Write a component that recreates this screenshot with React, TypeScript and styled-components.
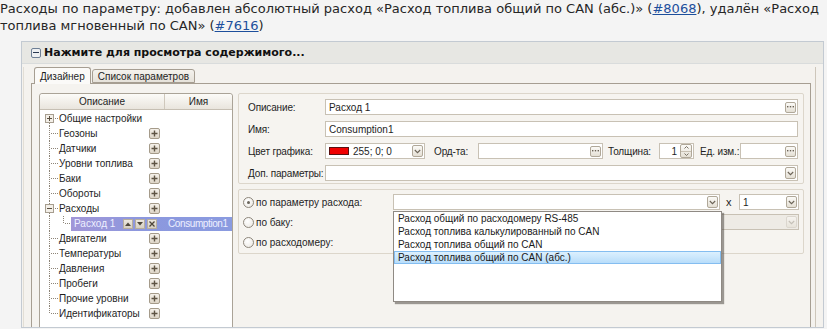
import React from 'react';
import styled, { createGlobalStyle } from 'styled-components';

const UI = `"Liberation Sans", Arial, sans-serif`;

const Global = createGlobalStyle`
  html, body { margin: 0; padding: 0; background: #f4f4f4; }
  * { box-sizing: border-box; }
`;

const Page = styled.div`
  width: 827px;
  height: 329px;
  overflow: hidden;
  background: #f4f4f4;
`;

const Intro = styled.p`
  margin: 0;
  font-family: "DejaVu Sans", sans-serif;
  font-size: 13px;
  line-height: 17px;
  color: #262626;
  white-space: nowrap;
`;

const Link = styled.a`
  color: #1d4f9c;
  text-decoration: underline;
`;

const Spoiler = styled.div`
  margin: 7px 0 0 21px;
  width: 803px;
  height: 287px;
  border: 1px solid #c3cad2;
  overflow: hidden;
  display: flex;
  flex-direction: column;
`;

const SpoilerHead = styled.div`
  height: 22px;
  flex: none;
  background: #e7e7e3;
  border-bottom: 1px solid #d9dcdc;
  display: flex;
  align-items: center;
  gap: 3px;
  padding-left: 9px;
  font-family: "DejaVu Sans", sans-serif;
  font-weight: bold;
  font-size: 11px;
  color: #111;
`;

const SpoilerBody = styled.div`
  flex: 1;
  background: #f4f2ee;
  padding: 3px 7px 0 1px;
  overflow: hidden;
`;

const Window = styled.div`
  height: 300px;
  border-left: 1px solid #e2ded5;
  border-right: 1px solid #cdc6ba;
  padding: 0 4px 0 7px;
  font-family: ${UI};
  font-size: 10px;
  color: #1e1e1e;
`;

const TabStrip = styled.div`
  display: flex;
  align-items: flex-end;
  gap: 1px;
  height: 16px;
  padding-left: 3px;
`;

const Tab = styled.div<{ $active?: boolean }>`
  position: relative;
  z-index: ${(p) => (p.$active ? 2 : 1)};
  height: ${(p) => (p.$active ? 17 : 14)}px;
  margin-bottom: ${(p) => (p.$active ? -1 : 0)}px;
  padding: 0 5px;
  display: flex;
  align-items: center;
  border: 1px solid #a69e92;
  border-bottom: ${(p) => (p.$active ? 'none' : '1px solid #a69e92')};
  border-radius: 3px 3px 0 0;
  background: ${(p) => (p.$active ? '#fbfaf8' : 'linear-gradient(#f4f2ed, #e6e2da)')};
`;

const TabPanel = styled.div`
  height: 280px;
  border: 1px solid #a69e92;
  background: #f5f3ef;
  padding: 9px 6px 0 7px;
  display: flex;
  gap: 5px;
  align-items: flex-start;
`;

/* ---------- tree ---------- */

const Tree = styled.div`
  width: 194px;
  flex: none;
  height: 260px;
  background: #fff;
  border: 1px solid #aaa397;
  border-radius: 3px 3px 0 0;
  overflow: hidden;
`;

const TreeHead = styled.div`
  display: grid;
  grid-template-columns: 124px 1fr;
  height: 16px;
  background: linear-gradient(#fcfbf8, #e9e5dd);
  border-bottom: 1px solid #c6bfb3;
  border-radius: 3px 3px 0 0;
`;

const HeadCell = styled.div<{ $divider?: boolean }>`
  display: flex;
  align-items: center;
  justify-content: center;
  border-left: ${(p) => (p.$divider ? '1px solid #cfc8bc' : 'none')};
`;

const TreeBody = styled.div`
  padding-top: 1px;
`;

const Row = styled.div`
  height: 15px;
  display: flex;
  align-items: center;
`;

const NodeLabel = styled.div`
  width: 90px;
  flex: none;
  white-space: nowrap;
`;

const SmallBtn = styled.span`
  width: 11px;
  height: 11px;
  flex: none;
  display: inline-flex;
  align-items: center;
  justify-content: center;
  border: 1px solid #a59b8a;
  border-radius: 2px;
  background: linear-gradient(#f5f1ea, #ddd5c7);
`;

const Selected = styled.div`
  flex: 1;
  height: 14px;
  display: flex;
  align-items: center;
  padding-left: 3px;
  background: linear-gradient(90deg, #a196d8, #8c98de 45%, #8a9be0);
  color: #eef0ff;
  white-space: nowrap;
  overflow: hidden;
`;

const SelLabel = styled.span`
  width: 49px;
  flex: none;
`;

const SelBtns = styled.span`
  display: flex;
  gap: 2px;
  margin-right: 11px;
`;

const SelBtn = styled.span`
  width: 10px;
  height: 10px;
  display: inline-flex;
  align-items: center;
  justify-content: center;
  background: linear-gradient(#ece7de, #d6cfc2);
  border: 1px solid #b7ad9d;
`;

const SelName = styled.span`
  letter-spacing: -0.4px;
`;

/* ---------- form ---------- */

const FormArea = styled.div`
  flex: 1;
  display: flex;
  flex-direction: column;
  gap: 5px;
`;

const Group = styled.div`
  border: 1px solid #dcd6cb;
  border-radius: 2px;
  background: #f6f4f0;
`;

const PropsGrid = styled(Group)`
  display: grid;
  grid-template-columns: 77px 1fr;
  row-gap: 6px;
  align-items: center;
  padding: 5px 5px 2px 9px;
`;

const SourceGrid = styled(Group)`
  display: grid;
  grid-template-columns: 150px 1fr;
  grid-auto-rows: 20px;
  align-items: center;
  padding: 2px 4px 1px 4px;
`;

const Label = styled.span<{ $w?: number; $ml?: number }>`
  white-space: nowrap;
  flex: none;
  letter-spacing: -0.15px;
  width: ${(p) => (p.$w ? `${p.$w}px` : 'auto')};
  margin-left: ${(p) => p.$ml || 0}px;
`;

const Field = styled.div<{ $w?: number; $disabled?: boolean }>`
  height: 16px;
  display: flex;
  align-items: center;
  padding: 0 1px 0 3px;
  border: 1px solid #c8c1b4;
  background: ${(p) => (p.$disabled ? '#eeebe5' : '#fff')};
  width: ${(p) => (p.$w ? `${p.$w}px` : 'auto')};
  flex: ${(p) => (p.$w ? 'none' : '1')};
  white-space: nowrap;
  position: relative;
`;

const FieldText = styled.span`
  flex: 1;
`;

const BtnBox = styled.span<{ $dim?: boolean }>`
  width: 11px;
  height: 12px;
  flex: none;
  display: inline-flex;
  align-items: center;
  justify-content: center;
  border: 1px solid ${(p) => (p.$dim ? '#cfc9bf' : '#b0a899')};
  border-radius: 2px;
  background: linear-gradient(#fbfaf7, #e4dfd4);
  opacity: ${(p) => (p.$dim ? 0.6 : 1)};
`;

const Swatch = styled.span`
  width: 20px;
  height: 8px;
  background: #f00000;
  border: 1px solid #5a1010;
  margin-right: 4px;
`;

const Inline = styled.div`
  display: flex;
  align-items: center;
`;

const SpinBtns = styled.span`
  width: 12px;
  height: 14px;
  display: flex;
  flex-direction: column;
  border: 1px solid #b0a899;
  border-radius: 2px;
  background: linear-gradient(#fbfaf7, #e4dfd4);
  margin-left: 3px;
`;

const SpinHalf = styled.span<{ $top?: boolean }>`
  flex: 1;
  display: flex;
  align-items: center;
  justify-content: center;
  border-bottom: ${(p) => (p.$top ? '1px solid #c8c0b2' : 'none')};
`;

const Radio = styled.label`
  display: flex;
  align-items: center;
  gap: 2px;
  white-space: nowrap;
`;

const RadioCircle = styled.span<{ $on?: boolean }>`
  width: 11px;
  height: 11px;
  border-radius: 50%;
  border: 1px solid #8e877c;
  background: radial-gradient(circle at 40% 35%, #fff, #e9e6e0);
  display: inline-flex;
  align-items: center;
  justify-content: center;
  &::after {
    content: '';
    width: 3px;
    height: 3px;
    border-radius: 50%;
    background: ${(p) => (p.$on ? '#6a655c' : 'transparent')};
  }
`;

const ComboWrap = styled.div`
  position: relative;
  width: 327px;
  flex: none;
  display: flex;
`;

const Times = styled.span`
  margin-left: 6px;
  margin-right: auto;
  font-size: 11px;
`;

const Popup = styled.div`
  position: absolute;
  z-index: 5;
  left: 0;
  top: calc(100% + 1px);
  width: 329px;
  height: 91px;
  background: #fff;
  border: 1px solid #8f8a84;
  box-shadow: 2px 2px 1px rgba(80, 75, 70, 0.55);
`;

const Option = styled.div<{ $sel?: boolean }>`
  height: 13px;
  line-height: 11px;
  padding-left: 3px;
  white-space: nowrap;
  color: #1a1a1a;
  border: 1px solid ${(p) => (p.$sel ? '#84bdf0' : 'transparent')};
  background: ${(p) => (p.$sel ? 'linear-gradient(#dcf0fe, #b8ddfa)' : 'transparent')};
`;

const Minus = styled.span`
  width: 10px;
  height: 10px;
  border: 1px solid #6e7f95;
  border-radius: 2px;
  background: #eef0f2;
  display: inline-flex;
  align-items: center;
  justify-content: center;
  &::after {
    content: '';
    width: 6px;
    height: 1px;
    background: #2b3a52;
  }
`;

/* ---------- icons ---------- */

const DOT = '#8d8477';

type ConnKind = 'first' | 'mid' | 'last' | 'open' | 'pass';

const Box = ({ minus }: { minus?: boolean }) => (
  <g>
    <rect x="5.5" y="3.5" width="8" height="8" fill="#f3efe8" stroke="#a69d8f" rx="1" />
    <line x1="7" y1="7.5" x2="12" y2="7.5" stroke="#5a5040" />
    {!minus && <line x1="9.5" y1="5" x2="9.5" y2="10" stroke="#5a5040" />}
  </g>
);

const Connector = ({ kind }: { kind: ConnKind }) => (
  <svg width="19" height="15" viewBox="0 0 19 15" shapeRendering="crispEdges" style={{ flex: 'none' }}>
    {(kind === 'mid' || kind === 'pass') && (
      <line x1="9.5" y1="0" x2="9.5" y2="15" stroke={DOT} strokeDasharray="1 1" />
    )}
    {kind === 'last' && <line x1="9.5" y1="0" x2="9.5" y2="8" stroke={DOT} strokeDasharray="1 1" />}
    {kind === 'first' && <line x1="9.5" y1="12" x2="9.5" y2="15" stroke={DOT} strokeDasharray="1 1" />}
    {kind === 'open' && (
      <>
        <line x1="9.5" y1="0" x2="9.5" y2="3" stroke={DOT} strokeDasharray="1 1" />
        <line x1="9.5" y1="12" x2="9.5" y2="15" stroke={DOT} strokeDasharray="1 1" />
      </>
    )}
    {(kind === 'mid' || kind === 'last') && (
      <line x1="11" y1="7.5" x2="18" y2="7.5" stroke={DOT} strokeDasharray="1 1" />
    )}
    {(kind === 'first' || kind === 'open') && (
      <line x1="15" y1="7.5" x2="18" y2="7.5" stroke={DOT} strokeDasharray="1 1" />
    )}
    {(kind === 'first' || kind === 'open') && <Box minus={kind === 'open'} />}
  </svg>
);

const SubConnector = () => (
  <svg width="12" height="15" viewBox="0 0 12 15" shapeRendering="crispEdges" style={{ flex: 'none' }}>
    <line x1="4.5" y1="0" x2="4.5" y2="8" stroke={DOT} strokeDasharray="1 1" />
    <line x1="6" y1="7.5" x2="12" y2="7.5" stroke={DOT} strokeDasharray="1 1" />
  </svg>
);

const PlusIcon = () => (
  <svg width="7" height="7" viewBox="0 0 7 7">
    <path d="M3.5 0.5v6M0.5 3.5h6" stroke="#5e5444" strokeWidth="1.4" />
  </svg>
);

const Chevron = ({ color = '#6b6356' }: { color?: string }) => (
  <svg width="7" height="5" viewBox="0 0 7 5">
    <path d="M0.8 1l2.7 2.7L6.2 1" stroke={color} strokeWidth="1.1" fill="none" />
  </svg>
);

const Dots = () => (
  <svg width="7" height="2" viewBox="0 0 7 2">
    <rect x="0" y="0" width="1.4" height="1.4" fill="#6b6356" />
    <rect x="2.8" y="0" width="1.4" height="1.4" fill="#6b6356" />
    <rect x="5.6" y="0" width="1.4" height="1.4" fill="#6b6356" />
  </svg>
);

const Tri = ({ up }: { up?: boolean }) => (
  <svg width="6" height="4" viewBox="0 0 6 4">
    <path d={up ? 'M0 4L3 0.5 6 4z' : 'M0 0L3 3.5 6 0z'} fill="#4e463a" />
  </svg>
);

const TinyTri = ({ up }: { up?: boolean }) => (
  <svg width="5" height="3" viewBox="0 0 5 3">
    <path d={up ? 'M0.5 2.5L2.5 0.5 4.5 2.5' : 'M0.5 0.5L2.5 2.5 4.5 0.5'} stroke="#6b6356" fill="none" strokeWidth="0.9" />
  </svg>
);

const Cross = () => (
  <svg width="6" height="6" viewBox="0 0 6 6">
    <path d="M0.5 0.5l5 5M5.5 0.5l-5 5" stroke="#4e463a" strokeWidth="1.3" />
  </svg>
);

const EllipsisBtn = () => (
  <BtnBox style={{ height: 11 }}>
    <Dots />
  </BtnBox>
);

const DropBtn = ({ dim }: { dim?: boolean }) => (
  <BtnBox $dim={dim}>
    <Chevron color={dim ? '#a9a398' : '#6b6356'} />
  </BtnBox>
);

type Node = { label: string; kind: ConnKind; plus: boolean };

const before: Node[] = [
  { label: 'Общие настройки', kind: 'first', plus: false },
  { label: 'Геозоны', kind: 'mid', plus: true },
  { label: 'Датчики', kind: 'mid', plus: true },
  { label: 'Уровни топлива', kind: 'mid', plus: true },
  { label: 'Баки', kind: 'mid', plus: true },
  { label: 'Обороты', kind: 'mid', plus: true },
  { label: 'Расходы', kind: 'open', plus: true },
];

const after: Node[] = [
  { label: 'Двигатели', kind: 'mid', plus: true },
  { label: 'Температуры', kind: 'mid', plus: true },
  { label: 'Давления', kind: 'mid', plus: true },
  { label: 'Пробеги', kind: 'mid', plus: true },
  { label: 'Прочие уровни', kind: 'mid', plus: true },
  { label: 'Идентификаторы', kind: 'last', plus: true },
];

const TreeRow = ({ n }: { n: Node }) => (
  <Row>
    <Connector kind={n.kind} />
    <NodeLabel>{n.label}</NodeLabel>
    {n.plus && (
      <SmallBtn>
        <PlusIcon />
      </SmallBtn>
    )}
  </Row>
);

const options = [
  'Расход общий по расходомеру RS-485',
  'Расход топлива калькулированный по CAN',
  'Расход топлива общий по CAN',
  'Расход топлива общий по CAN (абс.)',
];

export default function App() {
  return (
    <Page>
      <Global />
      <Intro>
        Расходы по параметру: добавлен абсолютный расход «Расход топлива общий по CAN (абс.)» (
        <Link href="#">#8068</Link>), удалён «Расход
        <br />
        топлива мгновенный по CAN» (<Link href="#">#7616</Link>)
      </Intro>
      <Spoiler>
        <SpoilerHead>
          <Minus />
          Нажмите для просмотра содержимого...
        </SpoilerHead>
        <SpoilerBody>
          <Window>
            <TabStrip>
              <Tab $active>Дизайнер</Tab>
              <Tab>Список параметров</Tab>
            </TabStrip>
            <TabPanel>
              <Tree>
                <TreeHead>
                  <HeadCell>Описание</HeadCell>
                  <HeadCell $divider>Имя</HeadCell>
                </TreeHead>
                <TreeBody>
                  {before.map((n) => (
                    <TreeRow key={n.label} n={n} />
                  ))}
                  <Row>
                    <Connector kind="pass" />
                    <SubConnector />
                    <Selected>
                      <SelLabel>Расход 1</SelLabel>
                      <SelBtns>
                        <SelBtn>
                          <Tri up />
                        </SelBtn>
                        <SelBtn>
                          <Tri />
                        </SelBtn>
                        <SelBtn>
                          <Cross />
                        </SelBtn>
                      </SelBtns>
                      <SelName>Consumption1</SelName>
                    </Selected>
                  </Row>
                  {after.map((n) => (
                    <TreeRow key={n.label} n={n} />
                  ))}
                </TreeBody>
              </Tree>
              <FormArea>
                <PropsGrid>
                  <Label>Описание:</Label>
                  <Field>
                    <FieldText>Расход 1</FieldText>
                    <EllipsisBtn />
                  </Field>
                  <Label>Имя:</Label>
                  <Field>
                    <FieldText>Consumption1</FieldText>
                  </Field>
                  <Label>Цвет графика:</Label>
                  <Inline>
                    <Field $w={100}>
                      <Swatch />
                      <FieldText>255; 0; 0</FieldText>
                      <DropBtn />
                    </Field>
                    <Label $w={44} $ml={9}>
                      Орд-та:
                    </Label>
                    <Field $w={125}>
                      <FieldText />
                      <EllipsisBtn />
                    </Field>
                    <Label $w={51} $ml={5}>
                      Толщина:
                    </Label>
                    <Field $w={35}>
                      <FieldText style={{ textAlign: 'right' }}>1</FieldText>
                      <SpinBtns>
                        <SpinHalf $top>
                          <TinyTri up />
                        </SpinHalf>
                        <SpinHalf>
                          <TinyTri />
                        </SpinHalf>
                      </SpinBtns>
                    </Field>
                    <Label $w={40} $ml={6}>
                      Ед. изм.:
                    </Label>
                    <Field>
                      <FieldText />
                      <EllipsisBtn />
                    </Field>
                  </Inline>
                  <Label>Доп. параметры:</Label>
                  <Field>
                    <FieldText />
                    <DropBtn />
                  </Field>
                </PropsGrid>
                <SourceGrid>
                  <Radio>
                    <RadioCircle $on />
                    по параметру расхода:
                  </Radio>
                  <Inline>
                    <ComboWrap>
                      <Field>
                        <FieldText />
                        <DropBtn />
                      </Field>
                      <Popup>
                        {options.map((o, i) => (
                          <Option key={o} $sel={i === 3}>
                            {o}
                          </Option>
                        ))}
                      </Popup>
                    </ComboWrap>
                    <Times>x</Times>
                    <Field $w={60}>
                      <FieldText>1</FieldText>
                      <DropBtn />
                    </Field>
                  </Inline>
                  <Radio>
                    <RadioCircle />
                    по баку:
                  </Radio>
                  <Field $disabled>
                    <FieldText />
                    <DropBtn dim />
                  </Field>
                  <Radio>
                    <RadioCircle />
                    по расходомеру:
                  </Radio>
                  <span />
                </SourceGrid>
              </FormArea>
            </TabPanel>
          </Window>
        </SpoilerBody>
      </Spoiler>
    </Page>
  );
}
